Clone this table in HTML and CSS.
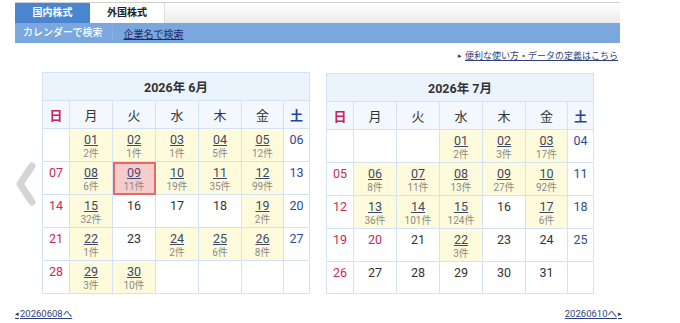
FILE: index.html
```html
<!DOCTYPE html>
<html lang="ja">
<head>
<meta charset="utf-8">
<title>カレンダー</title>
<link rel="stylesheet" href="styles.css">
</head>
<body>
<div class="page">
  <div class="tabs">
    <div class="tab active">国内株式</div>
    <div class="tab">外国株式</div>
  </div>
  <div class="subbar">
    <span class="sub-current">カレンダーで検索</span>
    <a class="sub-link" href="#">企業名で検索</a>
  </div>
  <div class="help"><span class="tri">▸</span><a href="#">便利な使い方・データの定義はこちら</a></div>

  <div class="cal-row">
    <div class="prev">
      <svg width="22" height="46" viewBox="0 0 22 46"><polyline points="17,5 5,23 17,41" fill="none" stroke="#d4d4d4" stroke-width="7" stroke-linecap="round" stroke-linejoin="round"/></svg>
    </div>

    <table class="cal">
      <colgroup><col class="c-sun"><col class="c-wd"><col class="c-wd"><col class="c-wd"><col class="c-wd"><col class="c-fri"><col class="c-sat"></colgroup>
      <tr><th colspan="7" class="month">2026年 6月</th></tr>
      <tr class="wk"><th class="sun">日</th><th>月</th><th>火</th><th>水</th><th>木</th><th>金</th><th class="sat">土</th></tr>
      <tr>
        <td></td>
        <td class="has"><a href="#">01</a><span>2件</span></td>
        <td class="has"><a href="#">02</a><span>1件</span></td>
        <td class="has"><a href="#">03</a><span>1件</span></td>
        <td class="has"><a href="#">04</a><span>5件</span></td>
        <td class="has"><a href="#">05</a><span>12件</span></td>
        <td class="sat">06</td>
      </tr>
      <tr>
        <td class="sun">07</td>
        <td class="has"><a href="#">08</a><span>6件</span></td>
        <td class="has sel"><a href="#">09</a><span>11件</span></td>
        <td class="has"><a href="#">10</a><span>19件</span></td>
        <td class="has"><a href="#">11</a><span>35件</span></td>
        <td class="has"><a href="#">12</a><span>99件</span></td>
        <td class="sat">13</td>
      </tr>
      <tr>
        <td class="sun">14</td>
        <td class="has"><a href="#">15</a><span>32件</span></td>
        <td>16</td>
        <td>17</td>
        <td>18</td>
        <td class="has"><a href="#">19</a><span>2件</span></td>
        <td class="sat">20</td>
      </tr>
      <tr>
        <td class="sun">21</td>
        <td class="has"><a href="#">22</a><span>1件</span></td>
        <td>23</td>
        <td class="has"><a href="#">24</a><span>2件</span></td>
        <td class="has"><a href="#">25</a><span>6件</span></td>
        <td class="has"><a href="#">26</a><span>8件</span></td>
        <td class="sat">27</td>
      </tr>
      <tr>
        <td class="sun">28</td>
        <td class="has"><a href="#">29</a><span>3件</span></td>
        <td class="has"><a href="#">30</a><span>10件</span></td>
        <td></td><td></td><td></td><td></td>
      </tr>
    </table>

    <table class="cal second">
      <colgroup><col class="c-sun"><col class="c-wd"><col class="c-wd"><col class="c-wd"><col class="c-wd"><col class="c-fri"><col class="c-sat"></colgroup>
      <tr><th colspan="7" class="month">2026年 7月</th></tr>
      <tr class="wk"><th class="sun">日</th><th>月</th><th>火</th><th>水</th><th>木</th><th>金</th><th class="sat">土</th></tr>
      <tr>
        <td></td><td></td><td></td>
        <td class="has"><a href="#">01</a><span>2件</span></td>
        <td class="has"><a href="#">02</a><span>3件</span></td>
        <td class="has"><a href="#">03</a><span>17件</span></td>
        <td class="sat">04</td>
      </tr>
      <tr>
        <td class="sun">05</td>
        <td class="has"><a href="#">06</a><span>8件</span></td>
        <td class="has"><a href="#">07</a><span>11件</span></td>
        <td class="has"><a href="#">08</a><span>13件</span></td>
        <td class="has"><a href="#">09</a><span>27件</span></td>
        <td class="has"><a href="#">10</a><span>92件</span></td>
        <td class="sat">11</td>
      </tr>
      <tr>
        <td class="sun">12</td>
        <td class="has"><a href="#">13</a><span>36件</span></td>
        <td class="has"><a href="#">14</a><span>101件</span></td>
        <td class="has"><a href="#">15</a><span>124件</span></td>
        <td>16</td>
        <td class="has"><a href="#">17</a><span>6件</span></td>
        <td class="sat">18</td>
      </tr>
      <tr>
        <td class="sun">19</td>
        <td class="sun">20</td>
        <td>21</td>
        <td class="has"><a href="#">22</a><span>3件</span></td>
        <td>23</td>
        <td>24</td>
        <td class="sat">25</td>
      </tr>
      <tr>
        <td class="sun">26</td>
        <td>27</td>
        <td>28</td>
        <td>29</td>
        <td>30</td>
        <td>31</td>
        <td></td>
      </tr>
    </table>
  </div>

  <div class="pager">
    <a href="#" class="pg-prev"><span class="tri">◂</span>20260608へ</a>
    <a href="#" class="pg-next">20260610へ<span class="tri">▸</span></a>
  </div>
</div>
</body>
</html>
```

FILE: styles.css
```css
html, body {
  margin: 0;
  padding: 0;
  background: #fff;
}
body {
  font-family: Roboto, "Noto Sans CJK JP", sans-serif;
  color: #333;
}
.page {
  width: 605px;
  padding: 2px 0 0 15px;
}
.tabs {
  display: flex;
  height: 20px;
  border-top: 1px solid #cfcfcf;
  background: linear-gradient(#ffffff, #ebebeb);
}
.tab {
  width: 75px;
  text-align: center;
  font-size: 10px;
  font-weight: bold;
  line-height: 20px;
  color: #222;
  background: #fff;
  border-right: 1px solid #dcdcdc;
  box-sizing: border-box;
}
.tab.active {
  background: #4a86d0;
  color: #fff;
  border-right: none;
}
.subbar {
  display: flex;
  align-items: center;
  height: 20px;
  background: #7aa7dd;
  font-size: 10px;
  padding-left: 8px;
}
.sub-current {
  color: #fff;
  font-weight: 500;
  padding-right: 10px;
  border-right: 1px solid #8cb4e3;
  line-height: 14px;
}
.sub-link {
  color: #1c2b66;
  margin-left: 10px;
  text-decoration: underline;
}
.help {
  margin-top: 7px;
  text-align: right;
  font-size: 9px;
  line-height: 12px;
  padding-right: 2px;
}
.help a {
  color: #2f3f7e;
  text-decoration: underline;
}
.tri {
  font-size: 7px;
  color: #333;
  margin-right: 3px;
  vertical-align: 1px;
}
.cal-row {
  display: flex;
  align-items: center;
  margin-top: 10px;
}
.prev {
  width: 27px;
  height: 46px;
  margin-top: 2px;
}
.prev svg {
  display: block;
}
.cal {
  border-collapse: collapse;
  table-layout: fixed;
  width: 268px;
  border: 1px solid #cddff0;
}
.cal.second {
  margin-left: 16px;
}
.c-sun { width: 27px; }
.c-wd { width: 43px; }
.c-fri { width: 42px; }
.c-sat { width: 26px; }
.cal th, .cal td {
  border: 1px solid #d3e3f3;
  padding: 0;
  text-align: center;
}
.month {
  height: 27px;
  background: #ebf4fd;
  font-size: 12.5px;
  font-weight: bold;
  color: #333;
}
.wk th {
  height: 27px;
  background: #f2f8fe;
  font-size: 13px;
  font-weight: normal;
  color: #333;
  font-family: "Noto Sans CJK JP", sans-serif;
}
.wk th.sun { color: #c8245a; font-weight: bold; }
.wk th.sat { color: #2446a6; font-weight: bold; }
.cal td {
  height: 32px;
  vertical-align: top;
  font-size: 12.5px;
  line-height: 14px;
  padding-top: 4px;
  box-sizing: border-box;
  color: #333;
}
.cal td.sun { color: #c8285a; }
.cal td.sat { color: #2c4b9c; }
.cal td.has {
  background: #fefbdc;
}
.cal td a {
  display: block;
  color: #3d4766;
  text-decoration: underline;
}
.cal td span {
  display: block;
  font-size: 10px;
  line-height: 14px;
  color: #8a8a8a;
  font-family: Roboto, "Noto Sans CJK JP", sans-serif;
}
.cal td.sel {
  background: #f9cccc;
  outline: 2px solid #e46a6a;
  outline-offset: -2px;
}
.cal td.sel a { color: #4a4a7a; }
.pager {
  display: flex;
  justify-content: space-between;
  margin-top: 14px;
  font-size: 9.5px;
  line-height: 12px;
}
.pager a {
  color: #2f3f7e;
  text-decoration: underline;
}
.pg-prev .tri { margin-right: 1px; }
.pg-next .tri { margin-left: 1px; margin-right: 0; }
.pg-next { margin-right: -2px; }
```
